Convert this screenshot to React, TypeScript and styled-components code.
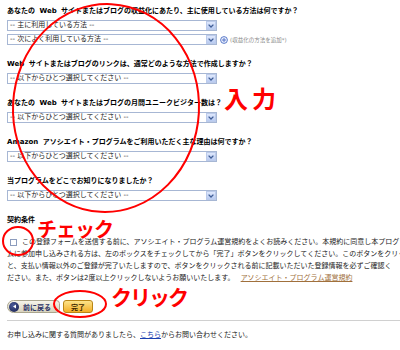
import React from "react";
import styled, { createGlobalStyle } from "styled-components";

const Global = createGlobalStyle`
  html, body { margin: 0; padding: 0; background: #fff; }
  body { overflow: hidden; }
`;

const Page = styled.div`
  position: relative;
  width: 400px;
  height: 350px;
  overflow: hidden;
  box-sizing: border-box;
  padding: 5px 0 0 7px;
  background: #fff;
  font-family: "DejaVu Sans", "Noto Sans CJK JP", sans-serif;
  color: #111;
`;

const Question = styled.div`
  margin-bottom: 13px;
`;

const Label = styled.div`
  font-weight: bold;
  font-size: 7px;
  line-height: 12px;
  height: 12px;
  white-space: nowrap;
  word-spacing: 2px;
  color: #000;
  margin-bottom: 3px;
`;

const SelectRow = styled.div<{ $gap?: number }>`
  display: flex;
  align-items: center;
  margin-top: ${(p) => p.$gap ?? 0}px;
`;

const SelectBox = styled.div`
  width: 210px;
  height: 11px;
  flex-shrink: 0;
  box-sizing: border-box;
  border: 1px solid #a7b7d4;
  background: #fff;
  display: flex;
  align-items: center;
  justify-content: space-between;
  font-size: 7px;
  line-height: 9px;
  color: #222;
  padding-left: 2px;
  white-space: nowrap;
`;

const ArrowBtn = styled.div`
  width: 10px;
  height: 9px;
  box-sizing: border-box;
  border: 1px solid #bccbea;
  background: linear-gradient(#dfe8fc, #b9cbf1);
  display: flex;
  align-items: center;
  justify-content: center;
`;

const AddIcon = styled.span`
  display: inline-flex;
  margin-left: 3px;
  width: 8px;
  height: 8px;
`;

const AddNote = styled.span`
  margin-left: 2px;
  font-size: 5.5px;
  color: #8a8a8a;
  white-space: nowrap;
`;

const Terms = styled.div`
  font-size: 7px;
  line-height: 12px;
  color: #222;
  white-space: nowrap;
  margin-top: 10px;
`;

const Line = styled.div`
  height: 12px;
  display: flex;
  align-items: center;
`;

const Checkbox = styled.span`
  display: inline-block;
  flex-shrink: 0;
  width: 7px;
  height: 7px;
  box-sizing: border-box;
  border: 1px solid #8c9cbd;
  background: #fff;
  margin: 0 5px 0 3px;
`;

const TermsLink = styled.a`
  color: #a0703c;
  text-decoration: underline;
  margin-left: 6px;
`;

const Buttons = styled.div`
  display: flex;
  gap: 3px;
  margin-top: 16px;
`;

const BackButton = styled.div`
  width: 53px;
  height: 13px;
  box-sizing: border-box;
  border: 1px solid #aaa58e;
  border-radius: 7px 4px 4px 7px;
  background: linear-gradient(#f6f4ea, #d8d3bd);
  display: flex;
  align-items: center;
  padding-left: 1px;
  gap: 4px;
  font-size: 7px;
  font-weight: bold;
  color: #2a3266;
`;

const BackIcon = styled.span`
  width: 10px;
  height: 10px;
  border-radius: 50%;
  background: radial-gradient(circle at 40% 35%, #4a5a9a, #141c48);
  display: inline-flex;
  align-items: center;
  justify-content: center;
`;

const DoneButton = styled.div`
  width: 30px;
  height: 13px;
  box-sizing: border-box;
  border: 1px solid #b98616;
  border-radius: 3px;
  background: linear-gradient(#fde48a, #f3ae27);
  display: flex;
  align-items: center;
  justify-content: center;
  font-size: 7px;
  font-weight: bold;
  color: #3a2600;
`;

const Rule = styled.div`
  height: 1px;
  background: #d0d0d0;
  margin-top: 7px;
`;

const Footer = styled.div`
  margin-top: 8px;
  font-size: 7px;
  line-height: 12px;
  color: #222;
  white-space: nowrap;
`;

const FooterLink = styled.a`
  color: #1a3fb0;
  text-decoration: underline;
`;

const Overlay = styled.svg`
  position: absolute;
  left: 0;
  top: 0;
  pointer-events: none;
`;

const Note = styled.span<{ $x: number; $y: number; $size: number; $ls: number }>`
  position: absolute;
  left: ${(p) => p.$x}px;
  top: ${(p) => p.$y}px;
  font-family: "Noto Sans CJK JP", sans-serif;
  font-weight: bold;
  font-size: ${(p) => p.$size}px;
  line-height: 1;
  letter-spacing: ${(p) => p.$ls}px;
  color: #ff0000;
  white-space: nowrap;
  pointer-events: none;
`;

const Chevron = () => (
  <svg width="6" height="4" viewBox="0 0 6 4">
    <path d="M0.6 0.6 L3 3 L5.4 0.6" fill="none" stroke="#3f5d96" strokeWidth="1.3" />
  </svg>
);

const Select = ({ text }: { text: string }) => (
  <SelectBox>
    <span>{text}</span>
    <ArrowBtn>
      <Chevron />
    </ArrowBtn>
  </SelectBox>
);

const DEFAULT = "-- 以下からひとつ選択してください --";

const questions = [
  "Web サイトまたはブログのリンクは、通常どのような方法で作成しますか？",
  "あなたの Web サイトまたはブログの月間ユニークビジター数は？",
  "Amazon アソシエイト・プログラムをご利用いただく主な理由は何ですか？",
  "当プログラムをどこでお知りになりましたか？",
];

export default function App() {
  return (
    <Page>
      <Global />
      <Question>
        <Label>あなたの Web サイトまたはブログの収益化にあたり、主に使用している方法は何ですか？</Label>
        <SelectRow>
          <Select text="-- 主に利用している方法 --" />
        </SelectRow>
        <SelectRow $gap={3}>
          <Select text="-- 次によく利用している方法 --" />
          <AddIcon>
            <svg width="8" height="8" viewBox="0 0 8 8">
              <circle cx="4" cy="4" r="3.4" fill="#eef3ff" stroke="#4a6cc2" strokeWidth="0.9" />
              <path d="M4 2 V6 M2 4 H6" stroke="#4a6cc2" strokeWidth="0.9" />
            </svg>
          </AddIcon>
          <AddNote>(収益化の方法を追加*)</AddNote>
        </SelectRow>
      </Question>
      {questions.map((q) => (
        <Question key={q}>
          <Label>{q}</Label>
          <SelectRow>
            <Select text={DEFAULT} />
          </SelectRow>
        </Question>
      ))}
      <Label>契約条件</Label>
      <Terms>
        <Line>
          <Checkbox />
          この登録フォームを送信する前に、アソシエイト・プログラム運営規約をよくお読みください。本規約に同意し本プログラム
        </Line>
        <Line>ムに参加申し込みされる方は、左のボックスをチェックしてから「完了」ボタンをクリックしてください。このボタンをクリックする</Line>
        <Line>と、支払い情報以外のご登録が完了いたしますので、ボタンをクリックされる前に記載いただいた登録情報を必ずご確認く</Line>
        <Line>
          ださい。また、ボタンは2度以上クリックしないようお願いいたします。
          <TermsLink href="#">アソシエイト・プログラム運営規約</TermsLink>
        </Line>
      </Terms>
      <Buttons>
        <BackButton>
          <BackIcon>
            <svg width="5" height="5" viewBox="0 0 5 5">
              <path d="M4 0.5 L1 2.5 L4 4.5 Z" fill="#fff" />
            </svg>
          </BackIcon>
          前に戻る
        </BackButton>
        <DoneButton>完了</DoneButton>
      </Buttons>
      <Rule />
      <Footer>
        お申し込みに関する質問がありましたら、<FooterLink href="#">こちら</FooterLink>からお問い合わせください。
      </Footer>

      <Overlay width="400" height="350" viewBox="0 0 400 350">
        <ellipse cx="106" cy="108" rx="93" ry="104" transform="rotate(3 106 108)" fill="none" stroke="#ff0000" strokeWidth="2" />
        <ellipse cx="18" cy="241" rx="15" ry="14" fill="none" stroke="#ff0000" strokeWidth="2" />
        <ellipse cx="80" cy="304" rx="26" ry="13" fill="none" stroke="#ff0000" strokeWidth="2" />
      </Overlay>
      <Note $x={224} $y={86} $size={24} $ls={4}>入力</Note>
      <Note $x={37} $y={219} $size={20} $ls={-1}>チェック</Note>
      <Note $x={111} $y={286} $size={21} $ls={-2}>クリック</Note>
    </Page>
  );
}
